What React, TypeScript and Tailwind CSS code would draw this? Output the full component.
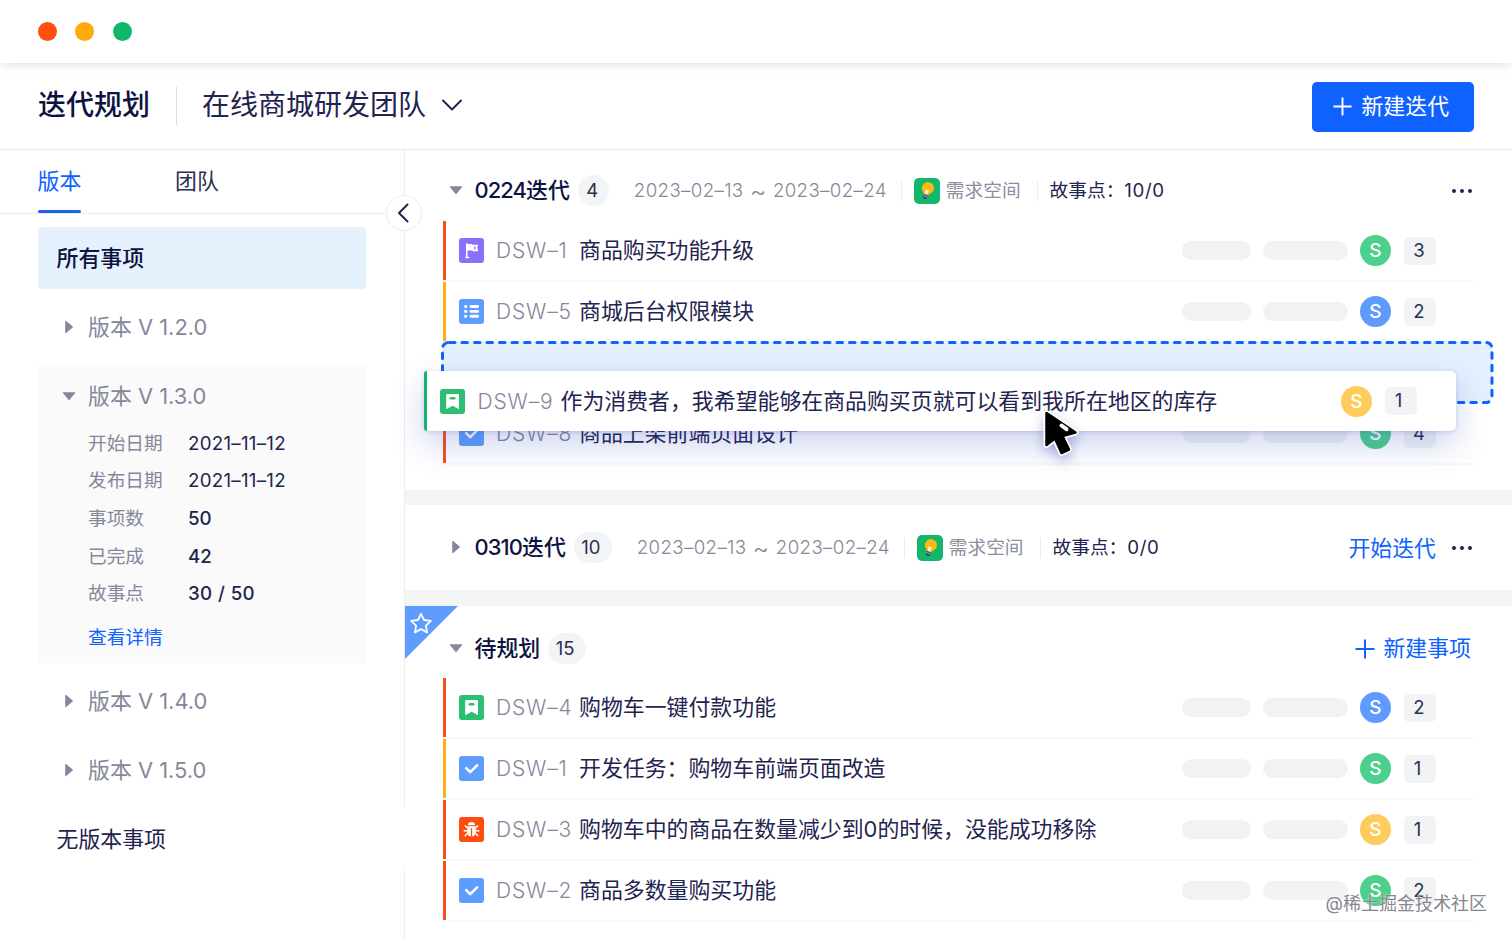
import React from "react";

type Kind = "flag" | "list" | "story" | "task" | "bug";

const kindBg: Record<Kind, string> = {
  flag: "bg-[#8a70fa]",
  list: "bg-[#5e9dfd]",
  story: "bg-[#2dbe74]",
  task: "bg-[#5e9dfd]",
  bug: "bg-[#fd4d0e]",
};

function KindIcon({ kind }: { kind: Kind }) {
  return (
    <span className={`flex h-[25px] w-[25px] shrink-0 items-center justify-center rounded-[3px] ${kindBg[kind]}`}>
      <svg width="25" height="25" viewBox="0 0 25 25" fill="none">
        {kind === "flag" && (
          <>
            <path d="M7.8 5.8V19.2M6.9 19.4h2.700" stroke="#fff" strokeWidth="1.500" strokeLinecap="round" />
            <path d="M7.800 6h4.800l.8.700h5.800l-1 2.600 1 3.900h-5.200l-.8-.800H7.800z" fill="#fff" />
            <path d="M16.300 8.300q-1.500 1.600 0 3.400" stroke="#8a70fa" strokeWidth="1.100" />
          </>
        )}
        {kind === "list" && (
          <>
            <path d="M12 7.500h6.600M12 12.400h6.600M12 17.300h6.600" stroke="#fff" strokeWidth="2.900" strokeLinecap="round" />
            <circle cx="6.700" cy="7.500" r="1.600" fill="#fff" />
            <circle cx="6.700" cy="12.400" r="1.600" fill="#fff" />
            <circle cx="6.700" cy="17.300" r="1.600" fill="#fff" />
          </>
        )}
        {kind === "story" && (
          <>
            <path d="M7.400 5h10.400c.7 0 1.200.500 1.200 1.200V20.200l-6.400-3.400-6.400 3.400V6.200c0-.7.500-1.200 1.200-1.200z" fill="#fff" />
            <path d="M10.800 9.300h3.600" stroke="#2dbe74" strokeWidth="2.400" strokeLinecap="round" />
          </>
        )}
        {kind === "task" && (
          <path d="M7.200 12.200l4 4 6.900-6.900" stroke="#fff" strokeWidth="2.600" strokeLinecap="round" strokeLinejoin="round" />
        )}
        {kind === "bug" && (
          <>
            <path d="M9 8.200a3.500 3.300 0 0 1 7 0z" fill="#fff" />
            <path d="M8.200 9.200h8.600v6.100a4.300 4.300 0 0 1-8.600 0z" fill="#fff" />
            <path d="M8.500 11L6.200 8.800M16.500 11l2.300-2.200M5.200 13.700h3.500M16.300 13.700h3.500M8.700 16l-2.500 2.700M16.300 16l2.500 2.700" stroke="#fff" strokeWidth="1.500" strokeLinecap="round" />
            <path d="M12.500 11.200v8.400" stroke="#fd4d0e" strokeWidth="1.300" />
          </>
        )}
      </svg>
    </span>
  );
}

const avatarBg = { green: "bg-[#4dcf8d]", blue: "bg-[#5e9bfd]", yellow: "bg-[#fdcc5b]" };
const barBg = { red: "bg-[#f4511e]", yellow: "bg-[#f9ae1a]", green: "bg-[#13b56a]" };

function Avatar({ color }: { color: keyof typeof avatarBg }) {
  return (
    <span className={`flex h-[31px] w-[31px] items-center justify-center rounded-full pt-0.5 text-[19px] font-medium text-white ${avatarBg[color]}`}>
      S
    </span>
  );
}

function Points({ value }: { value: number }) {
  return (
    <span className={`flex h-[28px] w-8 items-center justify-center rounded-[5px] bg-[#f2f3f5] text-[18.5px] text-[#2b3050] ${value === 1 ? "pr-[5px]" : "pr-0.5"}`}>
      {value}
    </span>
  );
}

function IssueKey({ id }: { id: string }) {
  return (
    <span className="ml-[12.5px] w-[83px] shrink-0 pt-px text-[21px] font-light tracking-[0.85px] whitespace-nowrap text-[#84889a]">
      {id}
    </span>
  );
}

type Item = { id: string; title: string; kind: Kind; bar: keyof typeof barBg; avatar: keyof typeof avatarBg; points: number };

function Row({ item }: { item: Item }) {
  return (
    <div className="flex h-[61px] items-stretch">
      <span className={`mb-0.5 w-[3px] shrink-0 ${barBg[item.bar]}`} />
      <div className="flex flex-1 items-center border-b-2 border-[#f8f8fa] pr-[38px] pl-[12.5px]">
        <KindIcon kind={item.kind} />
        <IssueKey id={item.id} />
        <span className="flex-1 text-[21.9px] whitespace-nowrap text-[#1f2450]">{item.title}</span>
        <span className="h-[19px] w-[69px] rounded-full bg-[#f1f2f4]" />
        <span className="ml-3 h-[19px] w-[85px] rounded-full bg-[#f1f2f4]" />
        <span className="ml-3 flex">
          <Avatar color={item.avatar} />
        </span>
        <span className="ml-[13px]">
          <Points value={item.points} />
        </span>
      </div>
    </div>
  );
}

function Triangle({ open }: { open: boolean }) {
  return (
    <svg width="14" height="14" viewBox="0 0 14 14" className="mb-px shrink-0" fill="#84879a">
      {open ? (
        <path d="M1.3 3.2h11.4c.5 0 .7.6.4.9L7.6 10.7c-.3.4-.9.4-1.200 0L.9 4.100c-.3-.3-.1-.9.4-.9z" />
      ) : (
        <path d="M3.200 1.300v11.400c0 .5.600.7.900.4l6.600-5.500c.4-.3.400-.9 0-1.200L4.100.900c-.3-.3-.9-.1-.9.400z" />
      )}
    </svg>
  );
}

function Bulb() {
  return (
    <svg width="26" height="26" viewBox="0 0 26 26" className="shrink-0">
      <rect width="26" height="26" rx="5" fill="#12b76a" />
      <g transform="rotate(18 13 13)">
        <path d="M13 4a6 6 0 0 1 3.700 10.700c-.7.600-1 1.200-1.200 2.300h-5c-.2-1.100-.5-1.700-1.200-2.300A6 6 0 0 1 13 4z" fill="#fcb814" />
        <path d="M10.800 10.800l1.200 1.700 1-1.200 1 1.200 1.200-1.700-.9 5.200h-2.600z" fill="#fff0b8" />
        <path d="M10.700 17h4.600v2.400c0 1.100-.8 1.900-2.300 1.900s-2.300-.8-2.300-1.900z" fill="#2b4a8c" />
        <path d="M10.700 18.500h4.600" stroke="#9fb6d8" strokeWidth=".8" />
      </g>
    </svg>
  );
}

function More() {
  return (
    <svg width="22" height="6" viewBox="0 0 22 6" fill="#1f2450">
      <circle cx="3" cy="3" r="2" />
      <circle cx="11" cy="3" r="2" />
      <circle cx="19" cy="3" r="2" />
    </svg>
  );
}

function Plus({ size, className }: { size: number; className?: string }) {
  return (
    <svg width={size} height={size} viewBox="0 0 20 20" className={className}>
      <path d="M10 .5v19M.5 10h19" stroke="currentColor" strokeWidth="2" />
    </svg>
  );
}

function SectionHead({ open, code, name, count, meta, points, children }: {
  open: boolean; code?: string; name: string; count: number; meta?: boolean; points?: string; children?: React.ReactNode;
}) {
  return (
    <div className="flex h-[31px] items-center pr-[39px] pl-[43.5px]">
      <Triangle open={open} />
      <span className="ml-3 text-[21.9px] font-medium whitespace-nowrap text-[#0c1340]">
        {code && <span className="tracking-[-0.9px]">{code}</span>}
        {name}
      </span>
      <span className={`ml-2 flex h-[31px] shrink-0 items-center justify-center rounded-full bg-[#f2f4f5] text-[18.5px] text-[#2b3050] ${count > 9 ? "w-[38px] pr-1" : "w-[31px] pr-0.5"}`}>{count}</span>
      {meta && (
        <>
          <span className="ml-[25px] flex w-[253px] items-center justify-between pt-0.5 text-[18.7px] font-light tracking-[0.35px] whitespace-nowrap text-[#84889a]">
            <span>2023–02–13</span>
            <span className="text-[25px] leading-none">~</span>
            <span>2023–02–24</span>
          </span>
          <span className="mr-3 ml-[14px] h-5 w-px bg-[#ebecef]" />
          <Bulb />
          <span className="pt-0.5 pl-[6px] text-[18.7px] text-[#8b8fa0]">需求空间</span>
          <span className="mr-3 ml-4 h-5 w-px bg-[#ebecef]" />
          <span className="pt-0.5 text-[18.7px] text-[#1f2450]">
            故事点：<span className="tracking-[0.6px]">{points}</span>
          </span>
        </>
      )}
      <div className="ml-auto flex items-center text-[#1062fe]">{children}</div>
    </div>
  );
}

const current: Item[] = [
  { id: "DSW–1", title: "商品购买功能升级", kind: "flag", bar: "red", avatar: "green", points: 3 },
  { id: "DSW–5", title: "商城后台权限模块", kind: "list", bar: "yellow", avatar: "blue", points: 2 },
];
const pushed: Item = { id: "DSW–8", title: "商品上架前端页面设计", kind: "task", bar: "red", avatar: "green", points: 4 };
const backlog: Item[] = [
  { id: "DSW–4", title: "购物车一键付款功能", kind: "story", bar: "red", avatar: "blue", points: 2 },
  { id: "DSW–1", title: "开发任务：购物车前端页面改造", kind: "task", bar: "yellow", avatar: "green", points: 1 },
  { id: "DSW–3", title: "购物车中的商品在数量减少到0的时候，没能成功移除", kind: "bug", bar: "red", avatar: "yellow", points: 1 },
  { id: "DSW–2", title: "商品多数量购买功能", kind: "task", bar: "red", avatar: "green", points: 2 },
];
const details = [
  ["开始日期", "2021–11–12"],
  ["发布日期", "2021–11–12"],
  ["事项数", "50"],
  ["已完成", "42"],
  ["故事点", "30 / 50"],
];

function Version({ name, open = false }: { name: string; open?: boolean }) {
  return (
    <div className="flex h-[69px] items-center pl-6">
      <Triangle open={open} />
      <span className="ml-3 text-[21.9px] text-[#84879a]">{name}</span>
    </div>
  );
}

function Sidebar() {
  return (
    <aside className="relative flex w-[405px] shrink-0 flex-col border-r border-[#ececf0]">
      <nav className="flex h-16 shrink-0 border-b border-[#ececf0] pl-[38px] text-[21.9px]">
        <span className="flex h-[63px] w-[43px] flex-col items-center justify-between whitespace-nowrap text-[#1062fe]">
          <span className="pt-[15px]">版本</span>
          <span className="h-[3px] w-full shrink-0 rounded-full bg-[#1f62ea]" />
        </span>
        <span className="ml-[94px] pt-[15px] text-[#2b3050]">团队</span>
      </nav>
      <div className="mt-[13px] ml-[38px] flex h-[62px] w-[328px] shrink-0 items-center rounded-[4px] bg-[#e6f1fe] pl-[18.5px] text-[21.9px] font-medium text-[#0c1340]">
        所有事项
      </div>
      <div className="ml-[38px] w-[328px] pt-[4px]">
        <Version name="版本 V 1.2.0" />
        <div className="mt-[3px] h-[298px] bg-[#fafafb] pt-px">
          <div className="-mt-1">
            <Version name="版本 V 1.3.0" open />
          </div>
          <dl className="-mt-[6px] text-[18.7px]">
            {details.map(([k, v], i) => (
              <div key={k} className="flex h-[37.6px] items-center pl-[50px]">
                <dt className="w-[100px] text-[#84889a]">{k}</dt>
                <dd className={`text-[#1f2450] ${i > 3 ? "font-medium tracking-[0.4px]" : i > 1 ? "font-medium" : "tracking-[0.28px]"}`}>{v}</dd>
              </div>
            ))}
          </dl>
          <div className="mt-[11px] pl-[50px] text-[18.7px] text-[#1062fe]">查看详情</div>
        </div>
        <div className="mt-[4px]">
          <Version name="版本 V 1.4.0" />
          <Version name="版本 V 1.5.0" />
        </div>
        <div className="flex h-[69px] items-center pl-[18.5px] text-[21.9px] text-[#1f2450]">无版本事项</div>
      </div>
      <span className="absolute top-[656px] -right-px h-16 w-px bg-white" />
      <span className="absolute top-[45px] -right-[17.5px] z-10 flex h-9 w-9 items-center justify-center rounded-full border border-[#ececf0] bg-white pr-px">
        <svg width="12" height="20" viewBox="0 0 12 20" fill="none">
          <path d="M10.500 1.500L2 10l8.500 8.500" stroke="#1f2450" strokeWidth="2" strokeLinecap="round" strokeLinejoin="round" />
        </svg>
      </span>
    </aside>
  );
}

function DropZone() {
  return (
    <div className="relative h-[62px]">
      <svg className="absolute top-[-2px] left-[-3px]" width="1056" height="66" fill="none">
        <rect x="2.500" y="2.500" width="1049.500" height="60" rx="6" fill="#e4f0fe" stroke="#0f62fe" strokeWidth="3" strokeDasharray="5.500 7" strokeLinecap="round" strokeDashoffset="-1" />
      </svg>
      <div className="absolute top-[29px] left-[-19px] z-10 flex h-[60px] w-[1032px] items-center rounded-[5px] bg-white shadow-[0_14px_32px_rgba(50,75,190,0.24),0_1px_4px_rgba(50,75,170,0.2)]">
        <span className="h-full w-[3px] rounded-l-[4px] bg-[#13b56a]" />
        <span className="ml-[13px] flex">
          <KindIcon kind="story" />
        </span>
        <IssueKey id="DSW–9" />
        <span className="flex-1 text-[21.9px] whitespace-nowrap text-[#1f2450]">作为消费者，我希望能够在商品购买页就可以看到我所在地区的库存</span>
        <Avatar color="yellow" />
        <span className="mr-[39px] ml-[13px]">
          <Points value={1} />
        </span>
        <svg className="absolute top-[36px] left-[616px] drop-shadow-[0_5px_6px_rgba(40,50,160,0.35)]" width="42" height="54" viewBox="0 0 42 54">
          <path d="M6.500 6v32l8.500-6.500L21.500 46l7.500-3.500L22.500 29 35.500 25.500z" fill="#000" stroke="#fff" strokeWidth="6" strokeLinejoin="round" />
          <path d="M6.500 6v32l8.500-6.500L21.500 46l7.500-3.500L22.500 29 35.500 25.500z" fill="#000" stroke="#000" strokeWidth="2.500" strokeLinejoin="round" />
          <path d="M21.500 18.500l5 3.700" stroke="#fff" strokeWidth="4" strokeLinecap="round" />
        </svg>
      </div>
    </div>
  );
}

export default function App() {
  return (
    <div className="relative flex h-[939px] w-[1512px] flex-col overflow-hidden bg-white font-[Inter,'Noto_Sans_CJK_SC',sans-serif] leading-normal">
      <div className="z-10 flex h-[63px] shrink-0 items-center gap-[18.5px] bg-white pl-[37.5px] shadow-[0_2px_10px_rgba(0,0,0,0.12)]">
        <span className="h-[19px] w-[19px] rounded-full bg-[#fe4f0f]" />
        <span className="h-[19px] w-[19px] rounded-full bg-[#feaa0c]" />
        <span className="h-[19px] w-[19px] rounded-full bg-[#10b768]" />
      </div>
      <header className="flex h-[87px] shrink-0 items-center border-b border-[#ececf0] pr-[38px] pl-[38px]">
        <h1 className="pb-0.5 text-[28px] font-medium text-[#0c1340]">迭代规划</h1>
        <span className="mr-[25.5px] ml-[25.5px] h-[38px] w-px bg-[#d9dbe0]" />
        <span className="pb-0.5 text-[28px] text-[#1f2450]">在线商城研发团队</span>
        <svg className="mb-0.5 ml-4" width="20" height="12" viewBox="0 0 20 12" fill="none">
          <path d="M1 1.500l9 9 9-9" stroke="#1f2450" strokeWidth="2" strokeLinecap="round" strokeLinejoin="round" />
        </svg>
        <button className="mt-px ml-auto flex h-[50px] w-[162.5px] items-center justify-center rounded-[5px] bg-[#1062fe] pr-[3px] text-[21.9px] text-white">
          <Plus size={19} className="mr-[9px]" />
          新建迭代
        </button>
      </header>
      <div className="flex min-h-0 flex-1">
        <Sidebar />
        <main className="flex min-w-0 flex-1 flex-col">
          <section className="h-[340px] shrink-0 pt-[25px]">
            <SectionHead open code="0224" name="迭代" count={4} meta points="10/0">
              <More />
            </SectionHead>
            <div className="mt-[15px] mr-[38px] ml-[38px]">
              {current.map((it) => (
                <Row key={it.id} item={it} />
              ))}
              <div className="-mt-px">
                <DropZone />
              </div>
              <Row item={pushed} />
            </div>
          </section>
          <div className="h-[15px] shrink-0 bg-[#f3f5f7]" />
          <section className="flex h-[85px] shrink-0 flex-col justify-center">
            <SectionHead open={false} code="0310" name="迭代" count={10} meta points="0/0">
              <span className="mr-[15px] pt-px text-[21.9px]">开始迭代</span>
              <More />
            </SectionHead>
          </section>
          <div className="h-4 shrink-0 bg-[#f3f5f7]" />
          <section className="relative flex-1 pt-[27px]">
            <svg className="absolute top-0 left-0" width="53" height="53" viewBox="0 0 53 53">
              <path d="M0 0h53L0 53z" fill="#5e9dfd" />
              <path d="M16 7.800l3 6.200 6.900.9-5 4.700 1.200 6.800-6.100-3.300-6.100 3.300 1.200-6.800-5-4.700 6.900-.9z" fill="none" stroke="#fff" strokeWidth="1.800" strokeLinejoin="round" />
            </svg>
            <SectionHead open name="待规划" count={15}>
              <Plus size={20} className="mr-2" />
              <span className="mr-[2px] text-[21.9px]">新建事项</span>
            </SectionHead>
            <div className="mt-[14px] mr-[38px] ml-[38px]">
              {backlog.map((it) => (
                <Row key={it.id} item={it} />
              ))}
            </div>
          </section>
        </main>
      </div>
      <span className="absolute right-[25px] bottom-[21px] text-[18px] leading-7 text-[#85878c] [text-shadow:0_0_2px_#fff]">@稀土掘金技术社区</span>
    </div>
  );
}
